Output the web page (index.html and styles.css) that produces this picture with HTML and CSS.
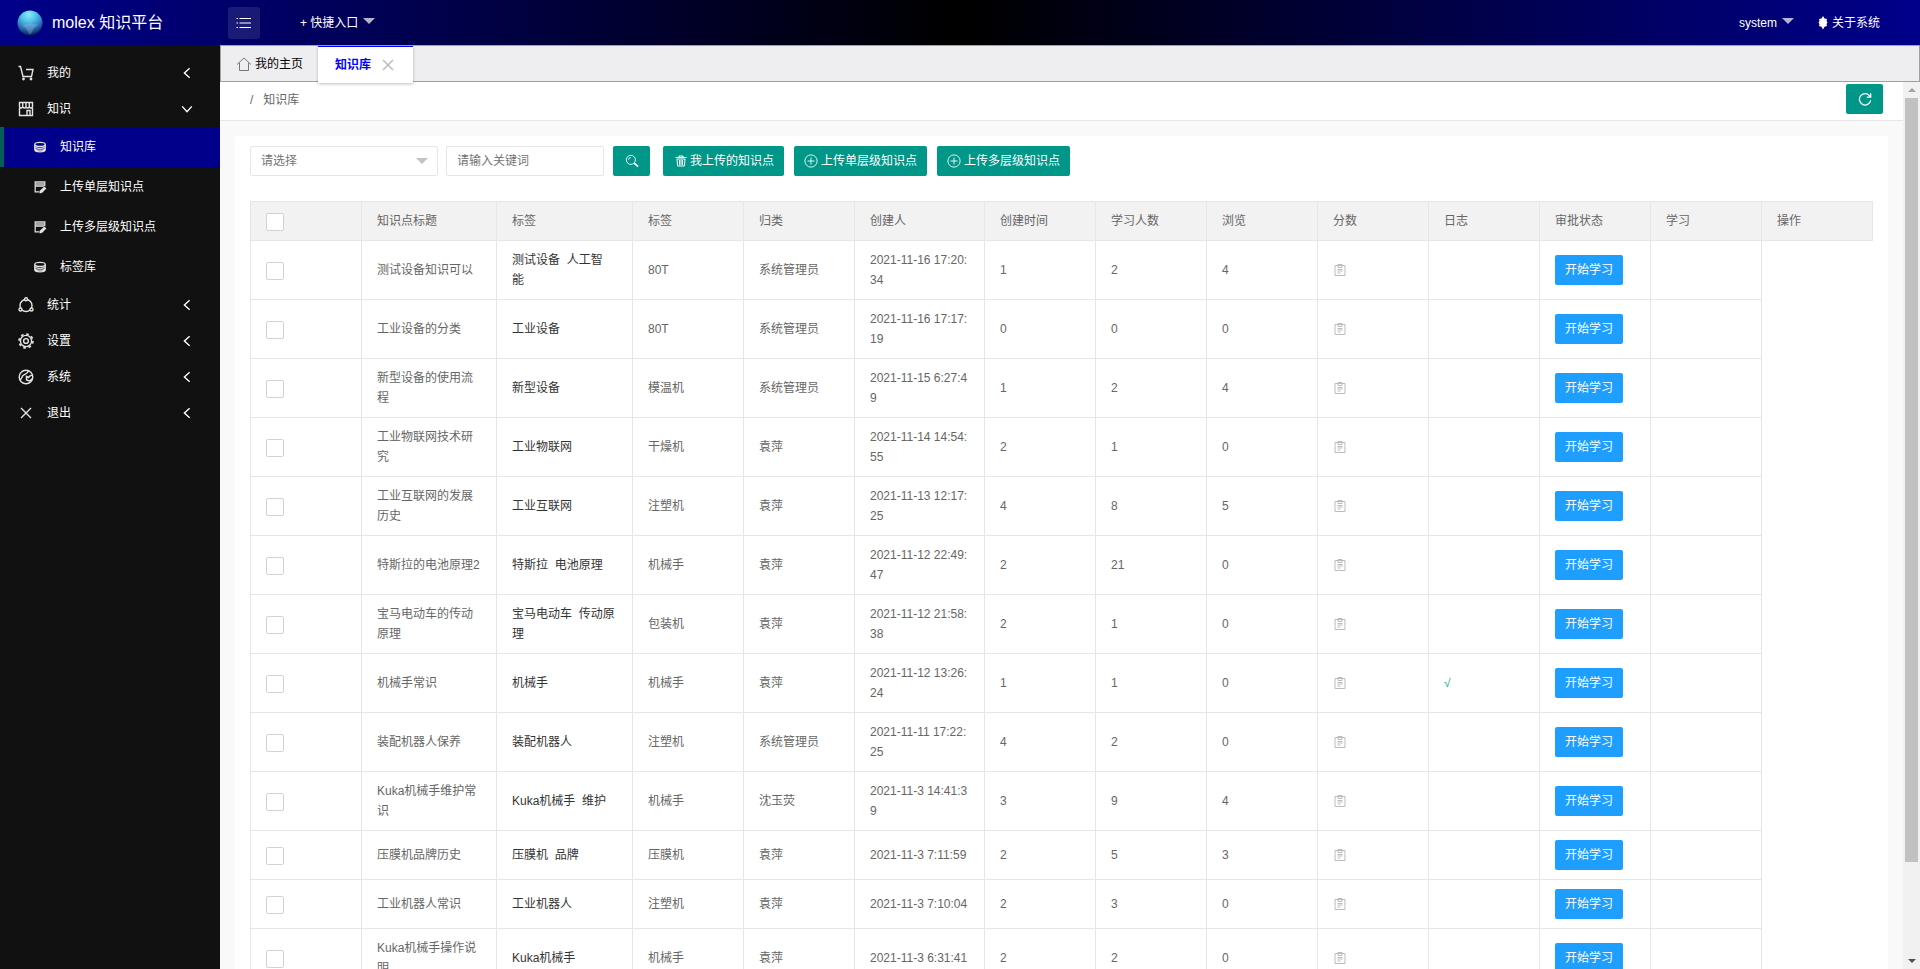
FILE: index.html
```html
<!DOCTYPE html>
<html lang="zh-CN">
<head>
<meta charset="utf-8">
<title>molex 知识平台</title>
<link rel="stylesheet" href="styles.css">
</head>
<body>
<svg class="sprite" aria-hidden="true">
  <defs>
    <radialGradient id="globe" cx="45%" cy="15%" r="85%">
      <stop offset="0" stop-color="#8ceaf5"/><stop offset=".35" stop-color="#4fc3ea"/><stop offset=".65" stop-color="#2f80c4"/><stop offset="1" stop-color="#0a1c55"/>
    </radialGradient>
    <symbol id="i-cart" viewBox="0 0 16 16"><path d="M.5 1.500h2L5 11.500h8.500L15 4.500H8"/><circle class="solid" cx="5.500" cy="14" r="1.400"/><circle class="solid" cx="13" cy="14" r="1.400"/></symbol>
    <symbol id="i-shop" viewBox="0 0 16 16"><path d="M1.500 7v7.500h13V7M1.500 1.500h13V6q-1.500 2-3.200 0-1.500 2-3.300 0-1.500 2-3.300 0-1.700 2-3.200 0zM4.700 1.500V6M8 1.500V6M11.300 1.500V6M9 14.500V9.500h3v5"/></symbol>
    <symbol id="i-data" viewBox="0 0 16 16"><ellipse cx="8" cy="5" rx="6" ry="2.300"/><path d="M2 5v6.200c0 3 12 3 12 0V5M2 7.200c0 3 12 3 12 0M2 9.400c0 3 12 3 12 0"/></symbol>
    <symbol id="i-edit" viewBox="0 0 16 16"><path d="M13.500 7V2h-11v11.500h5M3 7h9.500"/><path class="fade" d="M3 2.500h10v4H3z"/><path class="solid" d="M8 12l5-4.500 2.300 2.300-4.800 4.700-3 .8z"/></symbol>
    <symbol id="i-stat" viewBox="0 0 16 16"><circle cx="8" cy="8.500" r="6"/><circle class="node" cx="8" cy="2.300" r="1.500"/><circle class="node" cx="2.500" cy="12.500" r="1.500"/><circle class="node" cx="13.500" cy="12.500" r="1.500"/></symbol>
    <symbol id="i-gear" viewBox="0 0 16 16"><circle cx="8" cy="8" r="5.600"/><circle class="teeth" cx="8" cy="8" r="7"/><circle cx="8" cy="8" r="2.400"/></symbol>
    <symbol id="i-system" viewBox="0 0 16 16"><circle cx="8" cy="8" r="6.800"/><path d="M1.500 10.500c2.500 0 2-2.500 3.500-4s4-1 5.500-4.500M14.500 6.500c-2-.5-3 .5-4 2l-2-1v3.500l3 1 3-2.500"/></symbol>
    <symbol id="i-close" viewBox="0 0 16 16"><path d="M3 3l10 10M13 3L3 13"/></symbol>
    <symbol id="i-left" viewBox="0 0 16 16"><path d="M11 2.500L5 8l6 5.500"/></symbol>
    <symbol id="i-down" viewBox="0 0 16 16"><path d="M2.500 5L8 11l5.500-6"/></symbol>
    <symbol id="i-list" viewBox="0 0 16 16"><path d="M3.500 3.500H15M3.500 8H15M3.500 12.500H15M.5 3.500h1.500M.5 8h1.500M.5 12.500h1.500"/></symbol>
    <symbol id="i-home" viewBox="0 0 16 16"><path d="M1 8.500L8 2l7 6.500M3.500 7v7.500h9V7"/></symbol>
    <symbol id="i-search" viewBox="0 0 16 16"><circle cx="6.700" cy="6.700" r="5.200"/><path d="M4 6.500a2.700 2.700 0 0 1 2.500-2.500"/><path class="thick" d="M10.500 10.500l4.500 4"/></symbol>
    <symbol id="i-trash" viewBox="0 0 12 12"><path d="M.5 2.500h11M4 2V1h4v1M2 4l.6 7h6.800L10 4zM4.500 5v5M6 5v5M7.500 5v5"/></symbol>
    <symbol id="i-plus" viewBox="0 0 16 16"><circle cx="8" cy="8" r="7"/><path d="M8 4v8M4 8h8"/></symbol>
    <symbol id="i-refresh" viewBox="0 0 16 16"><path d="M13.800 5.200A6.500 6.500 0 1 0 14.500 9.500M14.500 1.500v4.300h-4.500"/></symbol>
    <symbol id="i-log" viewBox="0 0 12 12"><path d="M1 1.500h10v10H1zM4 1.500V.5h4v3H4zM3.500 5.500h5M3.500 7h5M3.500 9h3"/></symbol>
    <symbol id="i-leaf" viewBox="0 0 10 14"><path class="solid" d="M5 0l1.500 2.500 2.500.5-.5 2 1 1.500-1 1.500.5 2-2.500.7L5 13.500 3.500 10.700 1 10l.5-2-1-1.500 1-1.500L1 3l2.500-.5z"/></symbol>
  </defs>
</svg>

<header class="header">
  <a class="brand" href="#"><svg class="logo" viewBox="0 0 26 26"><circle cx="13" cy="13" r="12.500" fill="url(#globe)"/><path d="M5 15q8-3 16 0l-4 3-3 6h-2l-3-6z" fill="#b8bdd8" opacity=".3"/></svg>molex 知识平台</a>
  <button class="toggle" type="button" aria-label="菜单"><svg class="icon"><use href="#i-list"/></svg></button>
  <a class="quick" href="#">+ 快捷入口<span class="caret"></span></a>
  <nav class="account">
    <a href="#">system<span class="caret"></span></a>
    <a href="#"><svg class="leaf"><use href="#i-leaf"/></svg>关于系统</a>
  </nav>
</header>

<div class="body">
  <nav class="sidebar">
    <a class="item" href="#"><svg class="icon"><use href="#i-cart"/></svg><span>我的</span><svg class="chevron"><use href="#i-left"/></svg></a>
    <a class="item" href="#"><svg class="icon"><use href="#i-shop"/></svg><span>知识</span><svg class="chevron"><use href="#i-down"/></svg></a>
    <a class="sub active" href="#"><svg class="icon"><use href="#i-data"/></svg><span>知识库</span></a>
    <a class="sub" href="#"><svg class="icon"><use href="#i-edit"/></svg><span>上传单层知识点</span></a>
    <a class="sub" href="#"><svg class="icon"><use href="#i-edit"/></svg><span>上传多层级知识点</span></a>
    <a class="sub" href="#"><svg class="icon"><use href="#i-data"/></svg><span>标签库</span></a>
    <a class="item" href="#"><svg class="icon"><use href="#i-stat"/></svg><span>统计</span><svg class="chevron"><use href="#i-left"/></svg></a>
    <a class="item" href="#"><svg class="icon"><use href="#i-gear"/></svg><span>设置</span><svg class="chevron"><use href="#i-left"/></svg></a>
    <a class="item" href="#"><svg class="icon"><use href="#i-system"/></svg><span>系统</span><svg class="chevron"><use href="#i-left"/></svg></a>
    <a class="item" href="#"><svg class="icon"><use href="#i-close"/></svg><span>退出</span><svg class="chevron"><use href="#i-left"/></svg></a>
  </nav>

  <div class="main">
    <div class="tabs">
      <a class="tab" href="#"><svg class="icon"><use href="#i-home"/></svg>我的主页</a>
      <a class="tab current" href="#">知识库<svg class="icon"><use href="#i-close"/></svg></a>
    </div>
    <div class="frame">
      <div class="page">
        <div class="crumbs"><span>/</span><a href="#">知识库</a><button class="btn refresh" type="button" aria-label="刷新"><svg class="icon"><use href="#i-refresh"/></svg></button></div>
        <main class="card">
          <form class="toolbar">
            <div class="picker"><select aria-label="分类"><option>请选择</option></select></div>
            <input class="keyword" type="text" placeholder="请输入关键词" aria-label="关键词">
            <button class="btn search" type="button" aria-label="搜索"><svg class="icon"><use href="#i-search"/></svg></button>
            <button class="btn" type="button"><svg class="trash"><use href="#i-trash"/></svg>我上传的知识点</button>
            <button class="btn" type="button"><svg class="icon"><use href="#i-plus"/></svg>上传单层级知识点</button>
            <button class="btn" type="button"><svg class="icon"><use href="#i-plus"/></svg>上传多层级知识点</button>
          </form>
          <table class="grid">
            <colgroup><col class="c"><col class="title"><col class="tags"><col class="c"><col class="c"><col class="date"><col class="c"><col class="c"><col class="c"><col class="c"><col class="c"><col class="c"><col class="c"><col class="c"></colgroup>
            <thead><tr><th><input type="checkbox" aria-label="全选"></th><th>知识点标题</th><th>标签</th><th>标签</th><th>归类</th><th>创建人</th><th>创建时间</th><th>学习人数</th><th>浏览</th><th>分数</th><th>日志</th><th>审批状态</th><th>学习</th><th>操作</th></tr></thead>
            <tbody id="rows"></tbody>
          </table>
        </main>
      </div>
      <div class="scrollbar" aria-hidden="true"><span class="arrow up"></span><span class="thumb"></span><span class="rest"></span><span class="arrow dn"></span></div>
    </div>
  </div>
</div>
<script src="rows.js"></script>
</body>
</html>
```
FILE: rows.js
```js
const rows = [
  ["测试设备知识可以", ["测试设备", "人工智能"], "80T", "系统管理员", "2021-11-16 17:20:34", 1, 2, 4],
  ["工业设备的分类", ["工业设备"], "80T", "系统管理员", "2021-11-16 17:17:19", 0, 0, 0],
  ["新型设备的使用流程", ["新型设备"], "模温机", "系统管理员", "2021-11-15 6:27:49", 1, 2, 4],
  ["工业物联网技术研究", ["工业物联网"], "干燥机", "袁萍", "2021-11-14 14:54:55", 2, 1, 0],
  ["工业互联网的发展历史", ["工业互联网"], "注塑机", "袁萍", "2021-11-13 12:17:25", 4, 8, 5],
  ["特斯拉的电池原理2", ["特斯拉", "电池原理"], "机械手", "袁萍", "2021-11-12 22:49:47", 2, 21, 0],
  ["宝马电动车的传动原理", ["宝马电动车", "传动原理"], "包装机", "袁萍", "2021-11-12 21:58:38", 2, 1, 0],
  ["机械手常识", ["机械手"], "机械手", "袁萍", "2021-11-12 13:26:24", 1, 1, 0, true],
  ["装配机器人保养", ["装配机器人"], "注塑机", "系统管理员", "2021-11-11 17:22:25", 4, 2, 0],
  ["Kuka机械手维护常识", ["Kuka机械手", "维护"], "机械手", "沈玉荧", "2021-11-3 14:41:39", 3, 9, 4],
  ["压膜机品牌历史", ["压膜机", "品牌"], "压膜机", "袁萍", "2021-11-3 7:11:59", 2, 5, 3],
  ["工业机器人常识", ["工业机器人"], "注塑机", "袁萍", "2021-11-3 7:10:04", 2, 3, 0],
  ["Kuka机械手操作说明", ["Kuka机械手"], "机械手", "袁萍", "2021-11-3 6:31:41", 2, 2, 0]
];

document.getElementById("rows").innerHTML = rows.map(([title, tags, kind, owner, date, a, b, c, passed]) => `
  <tr>
    <td><input type="checkbox" aria-label="${title}"></td>
    <td>${title}</td>
    <td class="tag">${tags.map(t => t + "&nbsp;&nbsp;").join("")}</td>
    <td>${kind}</td><td>${owner}</td><td>${date}</td>
    <td>${a}</td><td>${b}</td><td>${c}</td>
    <td><svg class="log"><use href="#i-log"/></svg></td>
    <td class="passed">${passed ? "√" : ""}</td>
    <td><button class="btn study" type="button">开始学习</button></td>
    <td></td>
  </tr>`).join("");
```
FILE: styles.css
```css
* { box-sizing: border-box; }
body {
  margin: 0;
  height: 100vh;
  overflow: hidden;
  display: flex;
  flex-direction: column;
  font: 12px/20px "Liberation Sans", "Noto Sans CJK SC", sans-serif;
  color: #666;
}
a { color: inherit; text-decoration: none; }
button, input, select { font: inherit; }
svg { fill: none; stroke: currentColor; }
.sprite { position: absolute; width: 0; height: 0; }
.icon { width: 16px; height: 16px; flex: none; }
.solid { fill: currentColor; stroke: none; }
.fade { fill: currentColor; stroke: none; opacity: .7; }
.thick { stroke-width: 2; }

.header {
  flex: none;
  display: flex;
  align-items: center;
  height: 45px;
  background: linear-gradient(to right, #00008b, #000, #00008b);
  color: #fff;
}
.brand {
  display: flex;
  align-items: center;
  width: 228px;
  padding-left: 17px;
  font-size: 16px;
}
.logo { width: 26px; height: 26px; margin-right: 9px; stroke: none; }
.toggle {
  display: flex;
  align-items: center;
  justify-content: center;
  width: 32px;
  height: 32px;
  padding: 0;
  border: 0;
  border-radius: 3px;
  background: rgba(255, 255, 255, .1);
  color: #fff;
}
.quick { display: flex; align-items: center; margin-left: 40px; }
.caret {
  margin: 0 0 4px 5px;
  border: 6px solid transparent;
  border-top-color: rgba(255, 255, 255, .7);
  border-bottom-width: 0;
}
.account { display: flex; align-items: center; gap: 24px; margin-left: auto; padding-right: 40px; }
.account a { display: flex; align-items: center; }
.leaf { width: 10px; height: 14px; margin-right: 4px; }

.body { flex: 1; display: flex; min-height: 0; }
.sidebar { flex: none; width: 220px; padding-top: 10px; background: #111; color: #fff; }
.item, .sub { display: flex; align-items: center; }
.item { height: 36px; padding: 0 26px 0 18px; gap: 13px; }
.sub { height: 40px; padding-left: 33px; gap: 13px; }
.sub.active { background: #00008b; border-left: 4px solid #005f56; padding-left: 29px; }
.sidebar .icon { color: #e4e4e4; stroke-width: 1.4; }
.sidebar .sub .icon { width: 14px; height: 14px; }
.node { fill: #111; }
.teeth { stroke-dasharray: 2.7 2.8; stroke-width: 1.6; }
.chevron { width: 14px; height: 14px; margin-left: auto; stroke-width: 1.6; }

.main { flex: 1; display: flex; flex-direction: column; min-width: 0; }
.tabs {
  flex: none;
  display: flex;
  height: 37px;
  border: 1px solid #a0a0a0;
  background: #eeeef0;
  color: #000;
}
.tab { display: flex; align-items: center; padding: 0 15px; height: 36px; gap: 3px; }
.tab .icon { color: #777; }
.tab.current {
  z-index: 1;
  height: 37px;
  padding: 0 17px;
  gap: 9px;
  border-top: 1px solid #00f;
  background: #fff;
  box-shadow: 0 1px 3px rgba(0, 0, 0, .25);
  color: #00f;
  font-weight: bold;
}
.tab.current .icon { color: #bbb; stroke-width: 1.5; }

.frame { flex: 1; display: flex; min-height: 0; }
.page { flex: 1; min-width: 0; overflow: hidden; background: #f9f9f9; }
.crumbs {
  display: flex;
  align-items: center;
  gap: 10px;
  height: 39px;
  padding: 2px 20px 4px 30px;
  border-bottom: 1px solid #e6e6e6;
  background: #fff;
}
.btn {
  display: inline-flex;
  align-items: center;
  justify-content: center;
  gap: 3px;
  height: 30px;
  padding: 0 10px;
  border: 0;
  border-radius: 2px;
  background: #009688;
  color: #fff;
  white-space: nowrap;
}
.btn .icon { width: 14px; height: 14px; }
.refresh { align-self: flex-start; width: 37px; margin-left: auto; }
.refresh .icon { stroke-width: 1.4; }
.card { margin: 15px; padding: 10px 15px; border-radius: 2px; background: #fff; }
.toolbar { display: flex; gap: 10px; margin-bottom: 25px; }
.picker { position: relative; width: 188px; }
.picker::after {
  content: "";
  position: absolute;
  right: 10px;
  top: 12px;
  border: 6px solid transparent;
  border-top-color: #c2c2c2;
  border-bottom-width: 0;
}
.picker select, .keyword {
  width: 100%;
  height: 30px;
  padding: 0 10px;
  border: 1px solid #e6e6e6;
  border-radius: 2px;
  background: #fff;
  color: #757575;
  appearance: none;
}
.toolbar .keyword { width: 158px; margin-left: -2px; }
.keyword::placeholder { color: #757575; }
.search { width: 37px; margin: 0 3px 0 -1px; }
.trash { width: 12px; height: 12px; margin-left: 2px; }

.grid { width: 100%; table-layout: fixed; border-collapse: collapse; }
.c { width: 111px; }
.title { width: 135px; }
.tags { width: 136px; }
.date { width: 130px; }
th, td {
  padding: 9px 15px;
  border: 1px solid #e6e6e6;
  font-weight: normal;
  text-align: left;
  word-break: break-all;
}
th { background: #f2f2f2; }
.tag { color: #333; }
.passed { color: #16b777; }
.grid input {
  display: block;
  appearance: none;
  width: 18px;
  height: 18px;
  margin: 2px 0 0;
  border: 1px solid #d2d2d2;
  border-radius: 2px;
  background: #fff;
}
.log { display: block; width: 12px; height: 12px; margin-left: 1px; color: #bbb; }
.study { display: flex; background: #1e9fff; }

.scrollbar {
  flex: none;
  display: flex;
  flex-direction: column;
  align-items: center;
  width: 17px;
  padding: 6px 0;
  background: #f1f1f1;
}
.thumb { flex: 764; width: 13px; background: #c1c1c1; }
.rest { flex: 97; }
.arrow { border: 4px solid transparent; }
.up { border-top: 0; border-bottom-color: #a3a3a3; margin-bottom: 6px; }
.dn { border-bottom: 0; border-top-color: #505050; }
```
